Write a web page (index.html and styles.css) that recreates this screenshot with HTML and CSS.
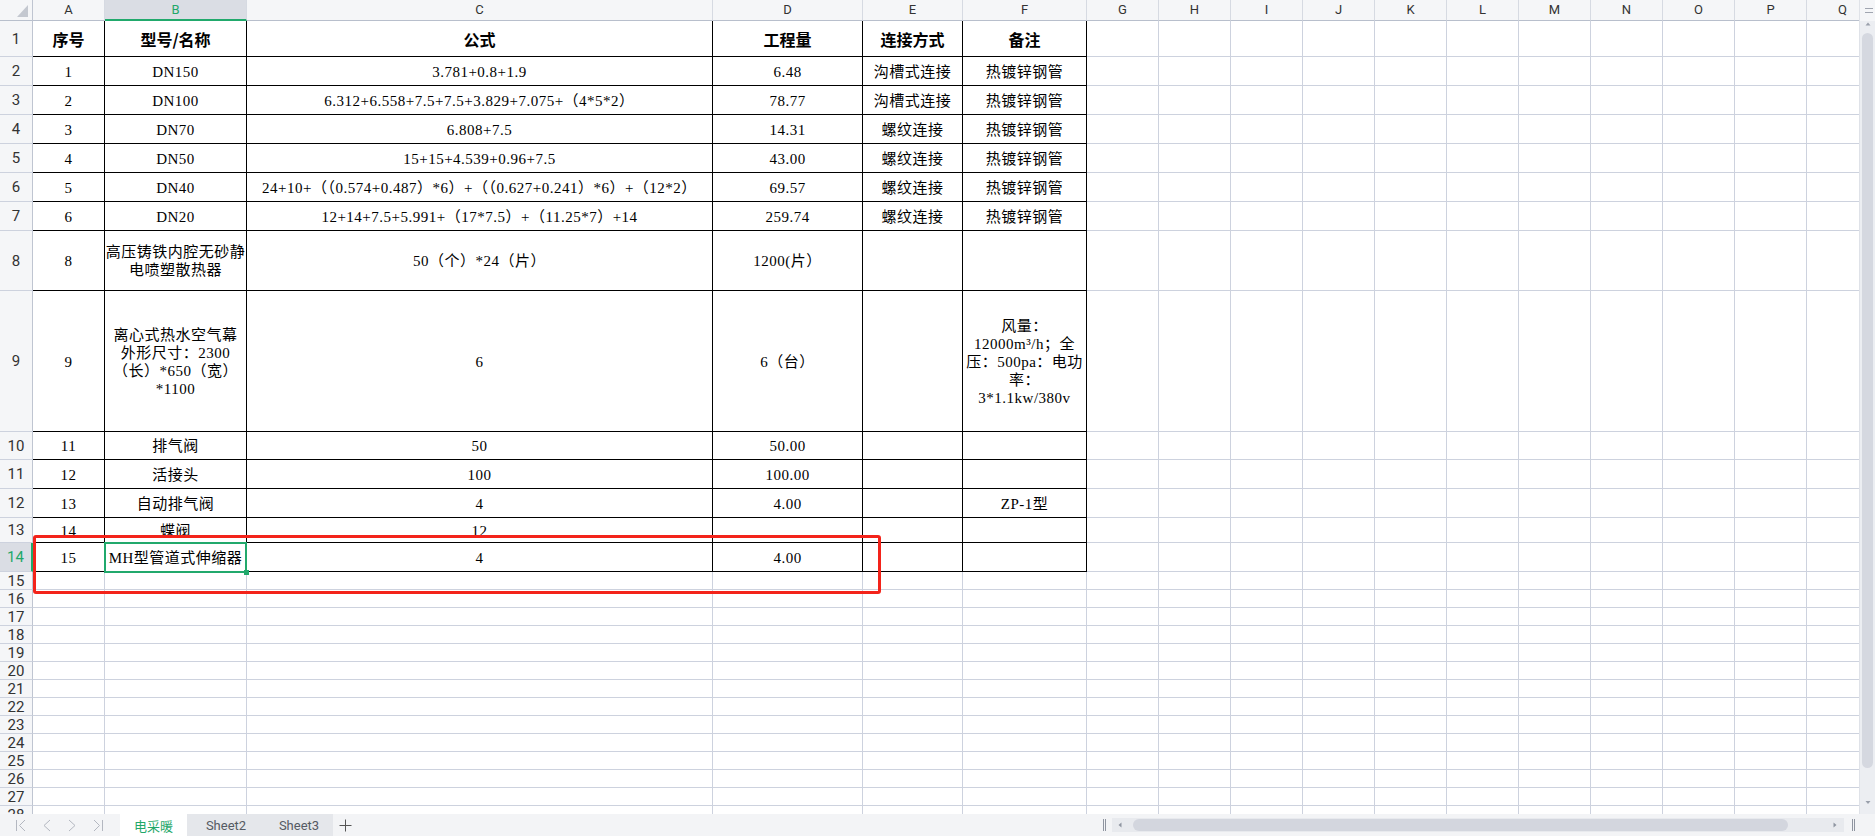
FILE: index.html
```html
<!DOCTYPE html>
<html lang="zh-CN">
<head>
<meta charset="utf-8">
<title>电采暖</title>
<link rel="stylesheet" href="styles.css">
</head>
<body>
<div class="app">
  <div class="main">
    <div class="sheet">
      <div class="row hdr h21"><div class="corner"><svg width="33" height="21" viewBox="0 0 33 21"><polygon points="28,5 28,17 17,17" fill="#c4c8d0"/></svg></div><div>A</div><div class="on">B</div><div>C</div><div>D</div><div>E</div><div>F</div><div>G</div><div>H</div><div>I</div><div>J</div><div>K</div><div>L</div><div>M</div><div>N</div><div>O</div><div>P</div><div>Q</div></div>
      <div class="row tb th h36"><div>1</div><div>序号</div><div>型号/名称</div><div>公式</div><div>工程量</div><div>连接方式</div><div>备注</div><div></div><div></div><div></div><div></div><div></div><div></div><div></div><div></div><div></div><div></div><div></div></div>
      <div class="row tb h29"><div>2</div><div>1</div><div>DN150</div><div>3.781+0.8+1.9</div><div>6.48</div><div>沟槽式连接</div><div>热镀锌钢管</div><div></div><div></div><div></div><div></div><div></div><div></div><div></div><div></div><div></div><div></div><div></div></div>
      <div class="row tb h29"><div>3</div><div>2</div><div>DN100</div><div>6.312+6.558+7.5+7.5+3.829+7.075+（4*5*2）</div><div>78.77</div><div>沟槽式连接</div><div>热镀锌钢管</div><div></div><div></div><div></div><div></div><div></div><div></div><div></div><div></div><div></div><div></div><div></div></div>
      <div class="row tb h29"><div>4</div><div>3</div><div>DN70</div><div>6.808+7.5</div><div>14.31</div><div>螺纹连接</div><div>热镀锌钢管</div><div></div><div></div><div></div><div></div><div></div><div></div><div></div><div></div><div></div><div></div><div></div></div>
      <div class="row tb h29"><div>5</div><div>4</div><div>DN50</div><div>15+15+4.539+0.96+7.5</div><div>43.00</div><div>螺纹连接</div><div>热镀锌钢管</div><div></div><div></div><div></div><div></div><div></div><div></div><div></div><div></div><div></div><div></div><div></div></div>
      <div class="row tb h29"><div>6</div><div>5</div><div>DN40</div><div>24+10+（（0.574+0.487）*6）+（（0.627+0.241）*6）+（12*2）</div><div>69.57</div><div>螺纹连接</div><div>热镀锌钢管</div><div></div><div></div><div></div><div></div><div></div><div></div><div></div><div></div><div></div><div></div><div></div></div>
      <div class="row tb h29"><div>7</div><div>6</div><div>DN20</div><div>12+14+7.5+5.991+（17*7.5）+（11.25*7）+14</div><div>259.74</div><div>螺纹连接</div><div>热镀锌钢管</div><div></div><div></div><div></div><div></div><div></div><div></div><div></div><div></div><div></div><div></div><div></div></div>
      <div class="row tb h60"><div>8</div><div>8</div><div><span class="ml">高压铸铁内腔无砂静<br>电喷塑散热器</span></div><div>50（个）*24（片）</div><div>1200(片）</div><div></div><div></div><div></div><div></div><div></div><div></div><div></div><div></div><div></div><div></div><div></div><div></div><div></div></div>
      <div class="row tb h141"><div>9</div><div>9</div><div><span class="ml">离心式热水空气幕<br>外形尺寸：2300<br>（长）*650（宽）<br>*1100</span></div><div>6</div><div>6（台）</div><div></div><div><span class="ml">风量：<br>12000m³/h；全<br>压：500pa：电功<br>率：<br>3*1.1kw/380v</span></div><div></div><div></div><div></div><div></div><div></div><div></div><div></div><div></div><div></div><div></div><div></div></div>
      <div class="row tb h28"><div>10</div><div>11</div><div>排气阀</div><div>50</div><div>50.00</div><div></div><div></div><div></div><div></div><div></div><div></div><div></div><div></div><div></div><div></div><div></div><div></div><div></div></div>
      <div class="row tb h29"><div>11</div><div>12</div><div>活接头</div><div>100</div><div>100.00</div><div></div><div></div><div></div><div></div><div></div><div></div><div></div><div></div><div></div><div></div><div></div><div></div><div></div></div>
      <div class="row tb h29"><div>12</div><div>13</div><div>自动排气阀</div><div>4</div><div>4.00</div><div></div><div>ZP-1型</div><div></div><div></div><div></div><div></div><div></div><div></div><div></div><div></div><div></div><div></div><div></div></div>
      <div class="row tb h25"><div>13</div><div>14</div><div>蝶阀</div><div>12</div><div></div><div></div><div></div><div></div><div></div><div></div><div></div><div></div><div></div><div></div><div></div><div></div><div></div><div></div></div>
      <div class="row tb h29"><div class="on">14</div><div>15</div><div class="sel">MH型管道式伸缩器</div><div>4</div><div>4.00</div><div></div><div></div><div></div><div></div><div></div><div></div><div></div><div></div><div></div><div></div><div></div><div></div><div></div></div>
      <div class="row h18"><div>15</div><div></div><div></div><div></div><div></div><div></div><div></div><div></div><div></div><div></div><div></div><div></div><div></div><div></div><div></div><div></div><div></div><div></div></div>
      <div class="row h18"><div>16</div><div></div><div></div><div></div><div></div><div></div><div></div><div></div><div></div><div></div><div></div><div></div><div></div><div></div><div></div><div></div><div></div><div></div></div>
      <div class="row h18"><div>17</div><div></div><div></div><div></div><div></div><div></div><div></div><div></div><div></div><div></div><div></div><div></div><div></div><div></div><div></div><div></div><div></div><div></div></div>
      <div class="row h18"><div>18</div><div></div><div></div><div></div><div></div><div></div><div></div><div></div><div></div><div></div><div></div><div></div><div></div><div></div><div></div><div></div><div></div><div></div></div>
      <div class="row h18"><div>19</div><div></div><div></div><div></div><div></div><div></div><div></div><div></div><div></div><div></div><div></div><div></div><div></div><div></div><div></div><div></div><div></div><div></div></div>
      <div class="row h18"><div>20</div><div></div><div></div><div></div><div></div><div></div><div></div><div></div><div></div><div></div><div></div><div></div><div></div><div></div><div></div><div></div><div></div><div></div></div>
      <div class="row h18"><div>21</div><div></div><div></div><div></div><div></div><div></div><div></div><div></div><div></div><div></div><div></div><div></div><div></div><div></div><div></div><div></div><div></div><div></div></div>
      <div class="row h18"><div>22</div><div></div><div></div><div></div><div></div><div></div><div></div><div></div><div></div><div></div><div></div><div></div><div></div><div></div><div></div><div></div><div></div><div></div></div>
      <div class="row h18"><div>23</div><div></div><div></div><div></div><div></div><div></div><div></div><div></div><div></div><div></div><div></div><div></div><div></div><div></div><div></div><div></div><div></div><div></div></div>
      <div class="row h18"><div>24</div><div></div><div></div><div></div><div></div><div></div><div></div><div></div><div></div><div></div><div></div><div></div><div></div><div></div><div></div><div></div><div></div><div></div></div>
      <div class="row h18"><div>25</div><div></div><div></div><div></div><div></div><div></div><div></div><div></div><div></div><div></div><div></div><div></div><div></div><div></div><div></div><div></div><div></div><div></div></div>
      <div class="row h18"><div>26</div><div></div><div></div><div></div><div></div><div></div><div></div><div></div><div></div><div></div><div></div><div></div><div></div><div></div><div></div><div></div><div></div><div></div></div>
      <div class="row h18"><div>27</div><div></div><div></div><div></div><div></div><div></div><div></div><div></div><div></div><div></div><div></div><div></div><div></div><div></div><div></div><div></div><div></div><div></div></div>
      <div class="row h18"><div>28</div><div></div><div></div><div></div><div></div><div></div><div></div><div></div><div></div><div></div><div></div><div></div><div></div><div></div><div></div><div></div><div></div><div></div></div>
      <div class="annot"></div>
    </div>
    <div class="vs">
      <div class="vs-top"><svg width="15" height="21" viewBox="0 0 15 21"><path d="M5 8.5h8M5 12.5h8" stroke="#a0a5b0" stroke-width="1" fill="none"/></svg></div>
      <div class="vs-up"><svg width="15" height="12" viewBox="0 0 15 12"><path d="M8 1.5L10.5 4.5H5.5Z" fill="#9aa0ab"/></svg></div>
      <div class="vs-thumb"></div>
      <div class="vs-down"><svg width="15" height="6" viewBox="0 0 15 6"><path d="M5.5 1H10.5L8 4Z" fill="#9aa0ab"/></svg></div>
    </div>
  </div>
  <div class="tabbar">
    <div class="nav">
      <svg class="nb" width="26" height="22" viewBox="0 0 26 22"><path d="M8.5 6v11M17 6l-5.5 5.5L17 17"/></svg>
      <svg class="nb" width="26" height="22" viewBox="0 0 26 22"><path d="M16 6l-6 5.5 6 5.5"/></svg>
      <svg class="nb" width="26" height="22" viewBox="0 0 26 22"><path d="M9 6l6 5.5-6 5.5"/></svg>
      <svg class="nb" width="26" height="22" viewBox="0 0 26 22"><path d="M8 6l5.5 5.5L8 17M16.5 6v11"/></svg>
    </div>
    <div class="tab active">电采暖</div>
    <div class="tab t2">Sheet2</div>
    <div class="tab t3">Sheet3</div>
    <div class="add"><svg width="26" height="22" viewBox="0 0 26 22"><path d="M6.5 11.5h12M12.5 5.5v12" stroke="#555" stroke-width="1" fill="none"/></svg></div>
    <div class="hs">
      <svg class="grip" width="12" height="22" viewBox="0 0 12 22"><path d="M3.5 5v12M5.5 5v12" stroke="#8f95a0" stroke-width="1" fill="none"/></svg>
      <div class="track">
        <svg class="arr" width="10" height="14" viewBox="0 0 10 14"><path d="M5.5 4.5V9.5L2.5 7Z" fill="#8f95a1"/></svg>
        <div class="thumb"></div>
        <div class="spacer"></div>
        <svg class="arr" width="10" height="14" viewBox="0 0 10 14"><path d="M3.5 4.5V9.5L6.5 7Z" fill="#8f95a1"/></svg>
      </div>
      <svg class="grip2" width="8" height="22" viewBox="0 0 8 22"><path d="M2.5 5v12M4.5 5v12" stroke="#8f95a0" stroke-width="1" fill="none"/></svg>
    </div>
  </div>
</div>
</body>
</html>
```

FILE: styles.css
```css
* { box-sizing: border-box; }
html, body { margin: 0; padding: 0; }
body { background: #fff; overflow: hidden; }

.app { width: 1875px; height: 836px; display: flex; flex-direction: column; overflow: hidden; }
.main { height: 814px; display: flex; flex: none; }
.sheet { position: relative; width: 1859px; height: 814px; overflow: hidden; flex: none; }

.row { display: flex; width: max-content; }
.row > div {
  flex: none;
  display: flex;
  align-items: center;
  justify-content: center;
  text-align: center;
  white-space: nowrap;
  overflow: hidden;
  border-right: 1px solid #cdd2de;
  border-bottom: 1px solid #cdd2de;
  font-family: "Liberation Serif", "Noto Sans CJK SC", serif;
  font-size: 15px;
  line-height: 18px;
  letter-spacing: 0.5px;
  color: #000;
  padding: 1px 2px 0;
}
.row > div:nth-child(1) { width: 33px; }
.row > div:nth-child(2) { width: 72px; }
.row > div:nth-child(3) { width: 142px; }
.row > div:nth-child(4) { width: 466px; }
.row > div:nth-child(5) { width: 150px; }
.row > div:nth-child(6) { width: 100px; }
.row > div:nth-child(7) { width: 124px; }
.row > div:nth-child(n+8) { width: 72px; }

.h18 { height: 18px; }
.h21 { height: 21px; }
.h25 { height: 25px; }
.h28 { height: 28px; }
.h29 { height: 29px; }
.h36 { height: 36px; }
.h60 { height: 60px; }
.h141 { height: 141px; }

.ml { display: block; }

/* column header row */
.hdr > div {
  background: #f5f6f8;
  border-bottom-color: #b8bfcc;
  border-right-color: #d6dae2;
  font-family: Roboto, "Noto Sans", sans-serif;
  font-size: 13px;
  letter-spacing: 0;
  color: #333;
  padding: 0;
}
.hdr > div.on {
  background: #dadde4;
  color: #1fa86a;
  border-bottom: 2px solid #21a96c;
}
.hdr > div.corner { padding: 0; display: block; }
.corner svg { display: block; }

/* row header column */
.row > div:first-child {
  background: #f5f6f8;
  border-right-color: #bfc5d1;
  font-family: Roboto, "Noto Sans", sans-serif;
  font-size: 15px;
  letter-spacing: 0;
  color: #333;
  padding: 0;
}
.row > div.on:first-child {
  background: #dadde4;
  color: #1fa86a;
  border-right: 2px solid #21a96c;
}

/* bordered table region A1:F14 */
.tb > div:nth-child(n+2):nth-child(-n+7) { border-color: #000; }
.th > div:nth-child(n+2):nth-child(-n+7) {
  font-family: "Noto Sans CJK SC", sans-serif;
  font-weight: 700;
  font-size: 16px;
  letter-spacing: 0;
}

/* active cell */
.row > div.sel { position: relative; overflow: visible; }
.sel::after {
  content: "";
  position: absolute;
  left: -1px;
  top: -1px;
  right: -1px;
  bottom: -2px;
  border: 2px solid #21a96c;
}
.sel::before {
  content: "";
  position: absolute;
  right: -3px;
  bottom: -4px;
  width: 5px;
  height: 5px;
  background: #21a96c;
  z-index: 1;
}

/* red annotation */
.annot {
  position: absolute;
  left: 33px;
  top: 535px;
  width: 848px;
  height: 59px;
  border: 3px solid #f3231a;
  border-radius: 3px;
  pointer-events: none;
}

/* vertical scrollbar */
.vs {
  width: 16px;
  height: 814px;
  flex: none;
  background: #eceef2;
  border-left: 1px solid #dfe2e8;
  display: flex;
  flex-direction: column;
}
.vs-top { height: 21px; flex: none; background: #f5f6f8; }
.vs-top svg, .vs-up svg, .vs-down svg { display: block; }
.vs-up { height: 12px; flex: none; }
.vs-thumb {
  height: 735px;
  width: 11px;
  flex: none;
  margin-left: 2px;
  background: #d5d8e0;
  border-radius: 6px;
}
.vs-down { flex: 1; display: flex; align-items: flex-end; padding-bottom: 8px; }

/* sheet tab bar */
.tabbar {
  height: 22px;
  flex: none;
  display: flex;
  background: #f3f4f6;
  font-family: Roboto, "Noto Sans", "Noto Sans CJK SC", sans-serif;
}
.nav { width: 120px; flex: none; display: flex; padding-left: 8px; }
.nb { display: block; fill: none; stroke: #b3b7c0; stroke-width: 1; }
.tab {
  flex: none;
  display: flex;
  align-items: center;
  justify-content: center;
  font-size: 13px;
  color: #555a63;
  background: #e5e7eb;
}
.tab.active {
  width: 67px;
  background: #fff;
  color: #1fa86a;
  font-family: "Noto Sans CJK SC", sans-serif;
}
.tab.t2 { width: 78px; }
.tab.t3 { width: 68px; }
.add { width: 26px; flex: none; }
.add svg { display: block; }

.hs {
  margin-left: auto;
  width: 775px;
  flex: none;
  display: flex;
  align-items: center;
}
.grip, .grip2 { display: block; flex: none; }
.track {
  width: 732px;
  height: 14px;
  flex: none;
  background: #e8eaee;
  display: flex;
  align-items: center;
  padding: 0 4px;
}
.arr { display: block; flex: none; }
.thumb {
  width: 655px;
  height: 12px;
  flex: none;
  margin-left: 7px;
  background: #d3d6de;
  border-radius: 6px;
}
.spacer { flex: 1; }
.grip2 { margin-left: 6px; }
```
